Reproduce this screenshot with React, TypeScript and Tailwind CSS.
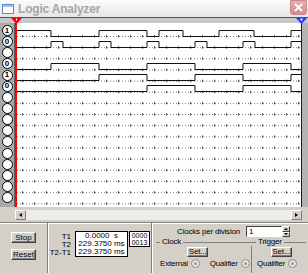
import React from "react";

const ROW_H = 11.15;
const CANVAS_W = 287;
const CANVAS_H = 184;

// channel waveforms: start level + transition x (page coords)
const signals: Record<number, { start: 0 | 1; edges: number[] }> = {
  0: { start: 1, edges: [51, 99, 147, 159, 183, 219, 254, 291] },
  1: { start: 0, edges: [51, 63, 99, 111, 147, 159, 195, 207, 243, 255, 291, 303] },
  3: { start: 0, edges: [51, 99, 147, 195, 243, 291] },
  4: { start: 0, edges: [99, 147, 195, 243, 291] },
  5: { start: 0, edges: [147, 195, 243, 291] },
};

const labels: Record<number, string> = { 0: "1", 1: "0", 3: "0", 4: "1", 5: "0" };

const X0 = 15;

function wavePath(base: number, start: 0 | 1, edges: number[]) {
  const hi = base - 6;
  let level = start;
  let d = `M ${16 - X0} ${level ? hi : base}`;
  for (const e of edges) {
    const x = Math.min(e, 301) - X0;
    d += ` H ${x}`;
    if (e >= 301) break;
    level = level ? 0 : 1;
    d += ` V ${level ? hi : base}`;
  }
  d += ` H ${301 - X0}`;
  return d;
}

const Waveforms: React.FC = () => {
  const rows = Array.from({ length: 16 }, (_, i) => i);
  const ticks = Array.from({ length: 24 }, (_, i) => 16 - X0 + i * 12 + 6);
  return (
    <svg width={CANVAS_W} height={CANVAS_H} className="block">
      {rows.map((i) => {
        const base = 13.5 + i * ROW_H;
        return (
          <g key={i}>
            <line
              x1={2}
              x2={286}
              y1={base}
              y2={base}
              stroke="#7a7a7a"
              strokeWidth={1}
              strokeDasharray="1 2"
            />
            {ticks.map((t) => (
              <line key={t} x1={t + 0.5} x2={t + 0.5} y1={base - 1.5} y2={base + 1} stroke="#555" strokeWidth={1} />
            ))}
          </g>
        );
      })}
      {Object.entries(signals).map(([k, s]) => {
        const i = Number(k);
        const base = 13.5 + i * ROW_H;
        return (
          <path key={k} d={wavePath(Math.round(base) - 0.5, s.start, s.edges)} fill="none" stroke="#111" strokeWidth={1} />
        );
      })}
      <line x1={1} x2={1} y1={0} y2={CANVAS_H} stroke="#ff0000" strokeWidth={2} />
      <line x1={286.5} x2={286.5} y1={0} y2={CANVAS_H} stroke="#0000ff" strokeWidth={1} />
    </svg>
  );
};

const Btn: React.FC<{ children: React.ReactNode; className?: string }> = ({ children, className }) => (
  <div
    className={
      "flex items-center justify-center border border-t-white border-l-white border-r-[#404040] border-b-[#404040] bg-[#d4d0c8] text-[8px] leading-none text-black shadow-[inset_-1px_-1px_0_#808080] " +
      (className ?? "")
    }
  >
    {children}
  </div>
);

const Radio: React.FC = () => (
  <div className="flex h-[9px] w-[9px] shrink-0 items-center justify-center rounded-full border border-[#8a8a8a] bg-[#e6e6e6]">
    <div className="h-[3px] w-[3px] rounded-full bg-[#9a9a9a]" />
  </div>
);

export default function App() {
  return (
    <div
      className="flex h-[273px] w-[308px] flex-col overflow-hidden bg-[#d4d0c8] text-black"
      style={{ fontFamily: '"Liberation Sans", Arial, sans-serif' }}
    >
      {/* title bar */}
      <div className="relative flex h-[17px] shrink-0 items-center bg-gradient-to-b from-[#fbfbfb] to-[#e6e6e6] pl-[2px]">
        <div className="mr-[4px] h-[10px] w-[12px] border border-[#5a8ac8] bg-white shadow-[inset_0_2px_0_#9cc0e8]" />
        <span className="text-[12px] font-bold leading-none tracking-[-0.2px] text-[#a6a6a6]">Logic Analyzer</span>
        <div className="absolute right-[1px] top-0 flex h-[15px] w-[17px] items-center justify-center rounded-b-[3px] border border-[#c88a8a] bg-gradient-to-b from-[#e6b0b0] to-[#d08c8c]">
          <svg width="9" height="9" viewBox="0 0 9 9">
            <path d="M1 1 L8 8 M8 1 L1 8" stroke="white" strokeWidth="1.8" />
          </svg>
        </div>
      </div>

      {/* ruler band */}
      <div className="relative h-[6px] shrink-0 border-t border-[#555] bg-[#c8c8c8]">
        <svg className="absolute left-[11px] top-0" width="11" height="6" viewBox="0 0 11 6">
          <path d="M0 0 H11 L5.5 6 Z" fill="#ff0000" />
          <rect x="5" y="0.5" width="1" height="2" fill="white" />
        </svg>
        <svg className="absolute left-[296px] top-0" width="11" height="6" viewBox="0 0 11 6">
          <path d="M0 0 H11 L5.5 6 Z" fill="#1a3cff" />
          <rect x="4.5" y="0.5" width="2" height="2" fill="white" />
        </svg>
      </div>

      {/* canvas */}
      <div className="flex h-[184px] shrink-0">
        <div className="flex w-[15px] shrink-0 flex-col items-center border-r border-[#606060] bg-[#a9a9a9] pt-[2px]">
          {Array.from({ length: 16 }, (_, i) => (
            <div key={i} className="flex h-[11.15px] w-full items-center justify-center">
              <div className="flex h-[11px] w-[11px] items-center justify-center rounded-full border border-black bg-white text-[8px] font-bold leading-none">
                {labels[i] ?? ""}
              </div>
            </div>
          ))}
        </div>
        <div className="bg-white">
          <Waveforms />
        </div>
        <div className="flex-1 bg-[#b4b4b4]" />
      </div>

      {/* horizontal scrollbar */}
      <div className="flex h-[15px] shrink-0 items-center pl-[15px] pr-[6px]">
        <div className="flex h-[10px] flex-1 bg-[#ececec]">
          <div className="flex w-[11px] items-center justify-center border border-t-white border-l-white border-r-[#808080] border-b-[#808080] bg-[#d4d0c8]">
            <div className="h-0 w-0 border-y-[2.5px] border-r-[3px] border-y-transparent border-r-black" />
          </div>
          <div className="flex-1" />
          <div className="flex w-[11px] items-center justify-center border border-t-white border-l-white border-r-[#808080] border-b-[#808080] bg-[#d4d0c8]">
            <div className="h-0 w-0 border-y-[2.5px] border-l-[3px] border-y-transparent border-l-black" />
          </div>
        </div>
      </div>

      {/* bottom panel */}
      <div className="flex flex-1 border-t border-t-[#808080] shadow-[inset_0_1px_0_white]">
        {/* stop / reset */}
        <div className="flex w-[48px] shrink-0 flex-col items-center gap-[6px] border-r border-r-[#808080] pt-[9px] shadow-[1px_0_0_white]">
          <Btn className="h-[11px] w-[25px]">Stop</Btn>
          <Btn className="h-[11px] w-[25px]">Reset</Btn>
        </div>

        {/* time readout */}
        <div className="flex w-[104px] shrink-0 border-r border-r-[#808080] pt-[8px] shadow-[1px_0_0_white]">
          <div className="flex w-[23px] flex-col items-end pt-[2px] text-[8px] leading-[8px]">
            <span>T1</span>
            <span>T2</span>
            <span>T2-T1</span>
          </div>
          <div className="ml-[4px] flex h-[26px] w-[53px] flex-col items-center justify-center border border-black bg-white text-[8px] leading-[8px]">
            <span>0.0000&nbsp;&nbsp;s</span>
            <span>229.3750 ms</span>
            <span>229.3750 ms</span>
          </div>
          <div className="ml-[1px] flex h-[16px] w-[21px] flex-col items-center justify-center border border-black bg-white text-[7px] leading-[7px]">
            <span>0000</span>
            <span className="underline">0013</span>
          </div>
        </div>

        {/* clock / trigger */}
        <div className="flex flex-1 flex-col tracking-[-0.2px]">
          <div className="flex h-[15px] items-center justify-end pr-[18px] pt-[2px]">
            <span className="text-[8px] leading-none">Clocks per division</span>
            <div className="ml-[6px] flex h-[11px] w-[36px] items-center border border-t-[#404040] border-l-[#404040] border-b-white border-r-white bg-white pl-[2px] text-[8px] leading-none">
              1
            </div>
            <div className="flex h-[11px] w-[8px] flex-col">
              <div className="flex flex-1 items-center justify-center border border-t-white border-l-white border-r-[#404040] border-b-[#404040] bg-[#d4d0c8]">
                <div className="h-0 w-0 border-x-[2px] border-b-[2px] border-x-transparent border-b-black" />
              </div>
              <div className="flex flex-1 items-center justify-center border border-t-white border-l-white border-r-[#404040] border-b-[#404040] bg-[#d4d0c8]">
                <div className="h-0 w-0 border-x-[2px] border-t-[2px] border-x-transparent border-t-black" />
              </div>
            </div>
          </div>
          <div className="flex pl-[4px] pr-[2px]">
            {/* clock group */}
            <div className="flex w-[96px] flex-col">
              <div className="flex items-center">
                <div className="h-[1px] w-[4px] bg-[#808080]" />
                <span className="px-[2px] text-[8px] leading-none">Clock</span>
                <div className="h-[1px] flex-1 bg-[#808080]" />
              </div>
              <div className="flex h-[30px] flex-col border-r border-r-[#808080]">
                <div className="flex justify-center pt-[1px] pr-[12px]">
                  <Btn className="h-[10px] w-[21px]">Set...</Btn>
                </div>
                <div className="mt-[2px] flex items-center pl-[4px] text-[8px] leading-none">
                  <span>External</span>
                  <div className="ml-[3px]">
                    <Radio />
                  </div>
                  <span className="ml-[10px]">Qualifier</span>
                  <div className="ml-[3px]">
                    <Radio />
                  </div>
                </div>
              </div>
            </div>
            {/* trigger group */}
            <div className="flex flex-1 flex-col">
              <div className="flex items-center">
                <div className="h-[1px] w-[4px] bg-[#808080]" />
                <span className="px-[2px] text-[8px] leading-none">Trigger</span>
                <div className="h-[1px] flex-1 bg-[#808080]" />
              </div>
              <div className="flex flex-col">
                <div className="flex justify-center pt-[1px] pl-[4px]">
                  <Btn className="h-[10px] w-[21px]">Set...</Btn>
                </div>
                <div className="mt-[2px] flex items-center pl-[5px] text-[8px] leading-none">
                  <span>Qualifier</span>
                  <div className="ml-[3px]">
                    <Radio />
                  </div>
                </div>
              </div>
            </div>
          </div>
        </div>
      </div>
    </div>
  );
}
